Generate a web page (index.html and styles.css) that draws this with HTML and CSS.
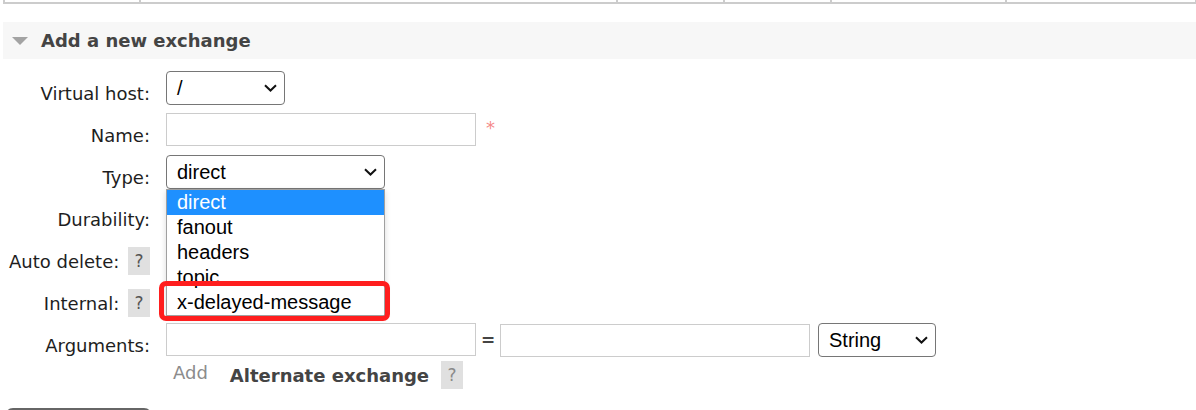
FILE: index.html
```html
<!DOCTYPE html>
<html lang="en">
<head>
<meta charset="utf-8">
<title>Add a new exchange</title>
<link rel="stylesheet" href="styles.css">
</head>
<body>
<div class="top-table">
  <div class="cell c1"></div>
  <div class="cell c2"></div>
  <div class="cell c3"></div>
  <div class="cell c4"></div>
  <div class="cell c5"></div>
  <div class="cell c6"></div>
</div>

<div class="section-head">
  <span class="tri"></span>
  <h2 class="title">Add a new exchange</h2>
</div>

<div class="form">
  <div class="label">Virtual host:</div>
  <div class="ctrl">
    <div class="select sel-vhost"><span>/</span><svg class="chev" width="13" height="8" viewBox="0 0 13 8"><path d="M1 1.2 L6.5 6.5 L12 1.2" fill="none" stroke="#111" stroke-width="2"/></svg></div>
  </div>

  <div class="label">Name:</div>
  <div class="ctrl">
    <div class="input"></div><span class="req">*</span>
  </div>

  <div class="label">Type:</div>
  <div class="ctrl">
    <div class="type-wrap">
      <div class="select sel-type"><span>direct</span><svg class="chev" width="13" height="8" viewBox="0 0 13 8"><path d="M1 1.2 L6.5 6.5 L12 1.2" fill="none" stroke="#111" stroke-width="2"/></svg></div>
      <ul class="popup">
        <li class="opt active">direct</li>
        <li class="opt">fanout</li>
        <li class="opt">headers</li>
        <li class="opt">topic</li>
        <li class="opt">x-delayed-message</li>
      </ul>
      <div class="mark"></div>
    </div>
  </div>

  <div class="label">Durability:</div>
  <div class="ctrl"></div>

  <div class="label">Auto delete: <span class="help">?</span></div>
  <div class="ctrl"></div>

  <div class="label">Internal: <span class="help">?</span></div>
  <div class="ctrl"></div>

  <div class="label">Arguments:</div>
  <div class="ctrl">
    <div class="input"></div>
    <span class="eq">=</span>
    <div class="input"></div>
    <div class="select sel-string"><span>String</span><svg class="chev" width="13" height="8" viewBox="0 0 13 8"><path d="M1 1.2 L6.5 6.5 L12 1.2" fill="none" stroke="#111" stroke-width="2"/></svg></div>
  </div>

  <div class="label empty"></div>
  <div class="ctrl add-row">
    <span class="add">Add</span>
    <span class="alt">Alternate exchange</span>
    <span class="help light">?</span>
  </div>
</div>

<div class="submit"></div>
</body>
</html>
```

FILE: styles.css
```css
* { box-sizing: border-box; }

body {
  margin: 0;
  font-family: "DejaVu Sans", Verdana, sans-serif;
  font-size: 18px;
  color: #1e1e1e;
  background: #fff;
  overflow: hidden;
}

.top-table {
  display: grid;
  grid-template-columns: 136px 477px 107px 107px 175px 190px;
  margin-left: 3px;
  width: 1194px;
  border-bottom: 2px solid #cccccc;
  border-right: 2px solid #cccccc;
}
.cell {
  height: 2px;
  border-left: 2px solid #cccccc;
}

.section-head {
  margin: 18px 0 0 3px;
  height: 37px;
  background: #f7f7f7;
  display: flex;
  align-items: center;
}
.tri {
  width: 0;
  height: 0;
  margin-left: 9px;
  border-left: 8px solid transparent;
  border-right: 8px solid transparent;
  border-top: 8px solid #a3a3a3;
}
.title {
  margin: 0 0 0 13px;
  font-size: 18px;
  font-weight: bold;
  color: #444444;
  line-height: 21px;
}

.form {
  margin-top: 12px;
  display: grid;
  grid-template-columns: 150px auto;
  column-gap: 16px;
  row-gap: 8px;
  grid-auto-rows: 34px;
}

.label {
  display: flex;
  justify-content: flex-end;
  align-items: flex-start;
  padding-top: 12px;
  line-height: 21px;
  white-space: pre;
  color: #1e1e1e;
}
.label .help { margin-top: -4px; margin-left: 3px; }

.ctrl {
  display: flex;
  align-items: flex-start;
}

.help {
  display: inline-flex;
  justify-content: center;
  align-items: center;
  width: 22px;
  height: 28px;
  background: #e0e0e0;
  color: #555;
  font-size: 17px;
}
.help.light { color: #8a8a8a; }

.select {
  position: relative;
  height: 34px;
  border: 1px solid #767676;
  border-radius: 4px;
  background: #fff;
  font-family: "Liberation Sans", Arial, sans-serif;
  font-size: 20px;
  color: #000;
  display: flex;
  align-items: center;
  padding-left: 10px;
}
.select .chev {
  position: absolute;
  right: 7px;
  top: 12px;
}
.sel-vhost { width: 119px; }
.sel-type { width: 219px; }
.sel-string { width: 118px; margin-left: 8px; }

.input {
  width: 310px;
  height: 33px;
  margin-top: 1px;
  border: 1px solid #cccccc;
  background: #fff;
}
.ctrl .input:first-child { margin-top: 0; }

.req {
  margin: 4px 0 0 10px;
  color: #f58a8a;
  font-size: 18px;
  line-height: 21px;
}

.eq {
  width: 24px;
  text-align: center;
  font-weight: bold;
  font-size: 17px;
  color: #444;
  padding-top: 7px;
}

.type-wrap {
  position: relative;
  width: 219px;
}

.popup {
  position: absolute;
  top: 34px;
  left: 0;
  width: 219px;
  margin: 0;
  padding: 0;
  list-style: none;
  background: #fff;
  border: 1px solid #a0a0a0;
  box-shadow: 0 2px 6px rgba(0,0,0,0.15);
  font-family: "Liberation Sans", Arial, sans-serif;
  font-size: 20px;
  color: #000;
  z-index: 5;
}
.opt {
  height: 25px;
  line-height: 25px;
  padding-left: 10px;
  white-space: nowrap;
}
.opt.active {
  background: #1e90ff;
  color: #fff;
}

.mark {
  position: absolute;
  left: -7px;
  top: 126px;
  width: 231px;
  height: 40px;
  border: 5px solid #ff1e1e;
  border-radius: 7px;
  z-index: 6;
}

.add-row {
  align-items: center;
  height: 28px;
  margin-top: -4px;
}
.add {
  margin-left: 7px;
  color: #8c8c8c;
  position: relative;
  top: -3px;
}
.alt {
  margin-left: 22px;
  margin-right: 12px;
  font-weight: bold;
  color: #444;
}

.submit {
  margin: 9px 0 0 5px;
  width: 147px;
  height: 30px;
  border: 2px solid #666;
  border-radius: 8px;
}
```
